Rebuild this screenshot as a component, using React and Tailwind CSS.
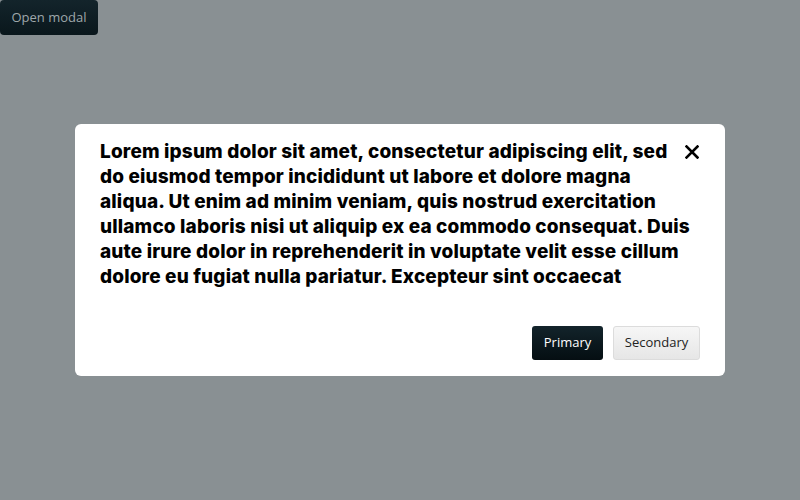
import { useState } from "react";

const lines = [
  "Lorem ipsum dolor sit amet, consectetur adipiscing elit, sed",
  "do eiusmod tempor incididunt ut labore et dolore magna",
  "aliqua. Ut enim ad minim veniam, quis nostrud exercitation",
  "ullamco laboris nisi ut aliquip ex ea commodo consequat. Duis",
  "aute irure dolor in reprehenderit in voluptate velit esse cillum",
  "dolore eu fugiat nulla pariatur. Excepteur sint occaecat",
];

function CloseIcon() {
  return (
    <svg width="14" height="14" viewBox="0 0 14 14" fill="none">
      <path d="M1.5 1.5 L12.5 12.5 M12.5 1.5 L1.5 12.5" stroke="#000" strokeWidth="2.6" strokeLinecap="square" />
    </svg>
  );
}

export default function App() {
  const [open, setOpen] = useState(true);

  return (
    <div className="relative h-[500px] w-[800px] overflow-hidden bg-[#899093] font-['Open_Sans',sans-serif]">
      <button
        onClick={() => setOpen(true)}
        className="h-[35px] w-[98px] rounded-[4px] bg-gradient-to-b from-[#13242b] to-[#0a171c] text-[13px] text-[#9ea7aa]"
      >
        Open modal
      </button>

      {open && (
        <div className="absolute left-[75px] top-[124px] w-[650px] rounded-[6px] bg-white px-[25px] pt-[15px] pb-[16px]">
          <button
            onClick={() => setOpen(false)}
            className="absolute right-[26px] top-[21px] flex h-[14px] w-[14px] items-center justify-center"
          >
            <CloseIcon />
          </button>
          <h2 className="text-[19px] leading-[25px] font-extrabold text-black font-['Inter',sans-serif] tracking-[0.15px] whitespace-nowrap">
            {lines.map((l) => (
              <span key={l} className="block">{l}</span>
            ))}
          </h2>
          <div className="mt-[37px] flex justify-end gap-[10px]">
            <button className="h-[34px] w-[71px] rounded-[3px] bg-gradient-to-b from-[#13242b] to-[#050e12] text-[13px] text-white">
              Primary
            </button>
            <button className="h-[34px] w-[87px] rounded-[3px] border border-[#dcdcdc] bg-gradient-to-b from-[#f6f6f6] to-[#e6e6e6] text-[13px] text-[#222]">
              Secondary
            </button>
          </div>
        </div>
      )}
    </div>
  );
}
